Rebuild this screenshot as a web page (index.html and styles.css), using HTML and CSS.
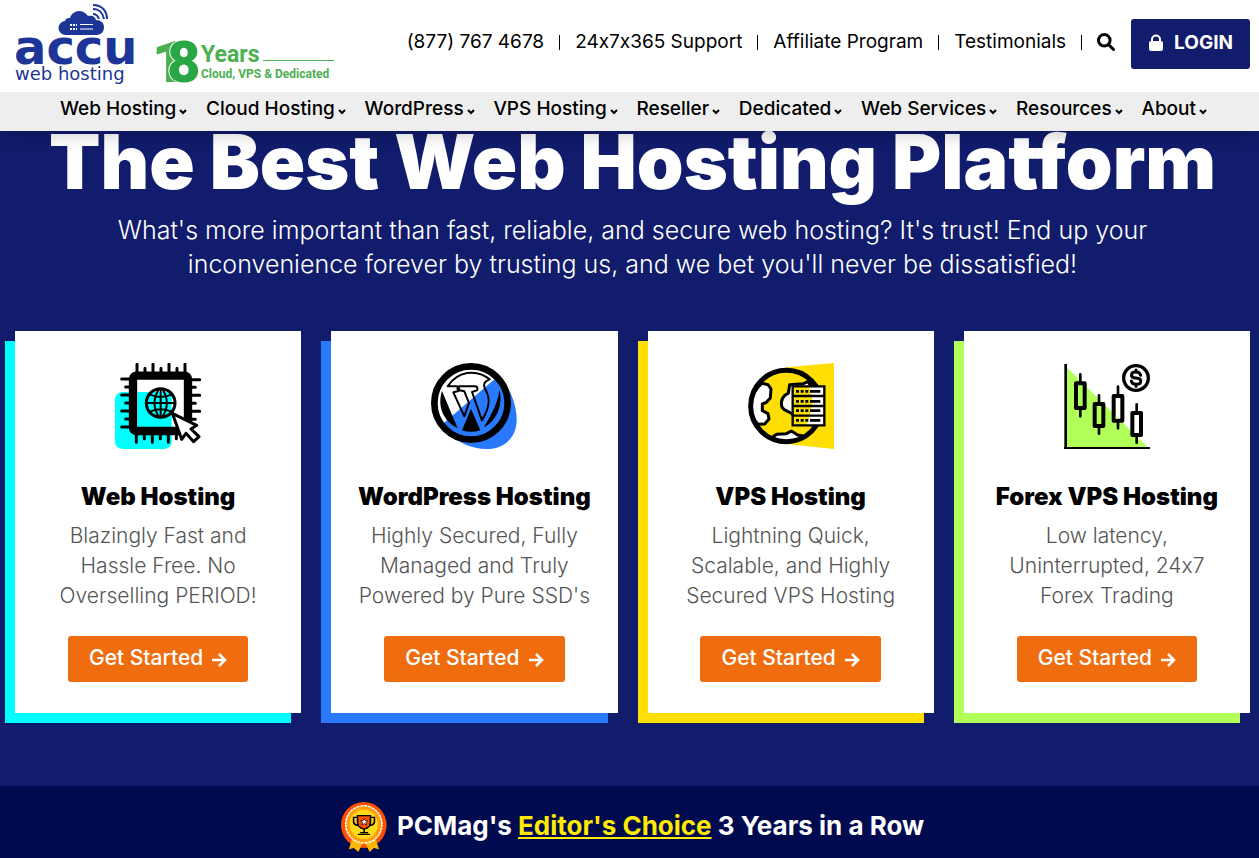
FILE: index.html
```html
<!DOCTYPE html>
<html lang="en">
<head>
    <meta charset="UTF-8">
    <meta name="viewport" content="width=device-width, initial-scale=1.0">
    <title>AccuWeb Hosting</title>
    <link rel="stylesheet" href="styles.css">
</head>
<body>
    <header class="header">
        <div class="topbar">
            <a href="#" class="logo" aria-label="AccuWeb Hosting">
                <svg width="336" height="92" viewBox="0 0 336 92">
                    <path fill="#1c3596" d="M66 35a7 7 0 0 1-1-14c1-3 3-3 5-3 1-4 5-7 9-7 4 0 7 2 9 5 5-1 7 1 8 4 5 0 8 3 8 7 0 5-3 8-8 8z"/>
                    <path stroke="#fff" stroke-width="1" d="M80 24.500h13M80 29h13"/>
                    <path stroke="#fff" stroke-width="2" stroke-dasharray="2 1" d="M70 25h7M70 29h7"/>
                    <path fill="none" stroke="#1c3596" stroke-width="2" d="M93 14c3 0 5 2 6 5M93 9c6 0 10 4 11 10M93 5c9 0 14 6 14 14"/>
                    <text class="logo-accu" x="14" y="64">accu</text>
                    <text class="logo-hosting" x="15" y="80">web hosting</text>
                    <text class="logo-digit" x="152" y="82" fill="#4caf50">1</text>
                    <text class="logo-digit" x="167" y="82" fill="#2aa745" stroke="#fff" stroke-width="2" paint-order="stroke">8</text>
                    <text class="logo-years" x="201" y="62">Years</text>
                    <path stroke="#4caf50" d="M263 60.500h71"/>
                    <text class="logo-tag" x="201" y="78">Cloud, VPS &amp; Dedicated</text>
                </svg>
            </a>
            <ul class="top-links">
                <li><a href="#">(877) 767 4678</a></li>
                <li><a href="#">24x7x365 Support</a></li>
                <li><a href="#">Affiliate Program</a></li>
                <li><a href="#">Testimonials</a></li>
                <li>
                    <button class="search" aria-label="Search">
                        <svg width="18" height="18" viewBox="0 0 18 18" fill="none" stroke="#000" stroke-width="3"><circle cx="7.300" cy="7.300" r="5.800"/><path stroke-linecap="round" d="M11.500 11.500l5 5"/></svg>
                    </button>
                </li>
            </ul>
            <a href="#" class="login">
                <svg width="16" height="18" viewBox="0 0 16 18"><rect x="1" y="8" width="14" height="10" rx="2" fill="#fff"/><path fill="none" stroke="#fff" stroke-width="2" d="M4 9V6.500a4 4 0 0 1 8 0V9"/></svg>
                LOGIN
            </a>
        </div>
        <nav class="menu">
            <a href="#">Web Hosting<svg class="caret" viewBox="0 0 8 6"><path d="M1 1l3 3 3-3"/></svg></a>
            <a href="#">Cloud Hosting<svg class="caret" viewBox="0 0 8 6"><path d="M1 1l3 3 3-3"/></svg></a>
            <a href="#">WordPress<svg class="caret" viewBox="0 0 8 6"><path d="M1 1l3 3 3-3"/></svg></a>
            <a href="#">VPS Hosting<svg class="caret" viewBox="0 0 8 6"><path d="M1 1l3 3 3-3"/></svg></a>
            <a href="#">Reseller<svg class="caret" viewBox="0 0 8 6"><path d="M1 1l3 3 3-3"/></svg></a>
            <a href="#">Dedicated<svg class="caret" viewBox="0 0 8 6"><path d="M1 1l3 3 3-3"/></svg></a>
            <a href="#">Web Services<svg class="caret" viewBox="0 0 8 6"><path d="M1 1l3 3 3-3"/></svg></a>
            <a href="#">Resources<svg class="caret" viewBox="0 0 8 6"><path d="M1 1l3 3 3-3"/></svg></a>
            <a href="#">About<svg class="caret" viewBox="0 0 8 6"><path d="M1 1l3 3 3-3"/></svg></a>
        </nav>
    </header>

    <main class="hero">
        <h1>The Best Web Hosting Platform</h1>
        <p class="lead">What's more important than fast, reliable, and secure web hosting? It's trust! End up your inconvenience forever by trusting us, and we bet you'll never be dissatisfied!</p>

        <div class="cards">
            <div class="card cyan">
                <svg class="icon" viewBox="45 39 258 258">
                    <rect x="45" y="126" width="170" height="171" rx="22" fill="#0ff"/>
                    <rect x="99" y="77" width="165" height="166" rx="8" fill="#fff"/>
                    <path fill="#0ff" d="M112 126h103v105H112z"/>
                    <rect x="99" y="77" width="165" height="166" rx="10" fill="none" stroke="#000" stroke-width="25"/>
                    <path stroke="#000" stroke-width="9" stroke-linecap="round" d="M111 68V43M135 68V55M159 68V43M183 68V55M207 68V43M231 68V55M255 68V43M109 252v25M133 252v14M157 252v25M181 252v14M205 252v25M229 252v14M90 87H65M90 111H77M90 135H65M90 159H77M90 183H65M90 207H77M90 231H65M274 89h25M274 112h12M274 136h25M274 160h12M274 184h25M274 208h12"/>
                    <g fill="none" stroke="#000">
                        <circle cx="182" cy="159" r="43" stroke-width="9"/>
                        <path stroke-width="6" d="M182 116v86M139 159h86M150 134q32 14 64 0M150 185q32-14 64 0M177 117q-27 42 0 84M187 117q27 42 0 84"/>
                    </g>
                    <path fill="#fff" stroke="#000" stroke-width="9" stroke-linejoin="round" d="M217 190l28 78 13-18 23 25 16-15-24-23 17-11z"/>
                </svg>
                <h2>Web Hosting</h2>
                <p>Blazingly Fast and Hassle Free. No Overselling PERIOD!</p>
                <a href="#" class="btn">Get Started <svg class="arrow" viewBox="0 0 16 16"><path d="M1 8h13M8 2l6 6-6 6"/></svg></a>
            </div>

            <div class="card blue">
                <svg class="icon" viewBox="46 39 258 258">
                    <path fill="#2979ff" d="M247 76C283 110 303 165 303 209c0 54-38 88-90 88-48 0-104-25-137-70z"/>
                    <circle cx="166" cy="159" r="110" fill="#fff"/>
                    <path fill="#2979ff" d="M244 81a110 110 0 0 1-154 157l-10-15z"/>
                    <circle cx="166" cy="159" r="110" fill="none" stroke="#000" stroke-width="20"/>
                    <path fill="#000" d="M79 123c-15 46 4 90 47 112zM251 119c12 43-6 91-46 113 25-45 43-77 46-113zM166 176l28 65q-28 9-55 0z"/>
                    <path fill="none" stroke="#000" stroke-width="6" stroke-linejoin="round" d="M96 109C125 64 181 55 222 88c-17 6-20 16-14 28 13 21 17 43 0 78l-9 17-30-85 15-5c4-8 0-12-7-12h-45c-9 0-9 11 0 12l14 3 14 35-14 40-33-72 16-4c4-9 0-14-7-14z"/>
                </svg>
                <h2>WordPress Hosting</h2>
                <p>Highly Secured, Fully Managed and Truly Powered by Pure SSD's</p>
                <a href="#" class="btn">Get Started <svg class="arrow" viewBox="0 0 16 16"><path d="M1 8h13M8 2l6 6-6 6"/></svg></a>
            </div>

            <div class="card yellow">
                <svg class="icon" viewBox="47 39 258 258">
                    <path fill="#ffde03" d="M306 39v258L162 282V52z"/>
                    <circle cx="162" cy="168" r="107" fill="#ffde03"/>
                    <g fill="#fff" stroke="#000" stroke-width="9" stroke-linejoin="round">
                        <path d="M89 100l18 4 9 13-2 27-12 13-12 5v20l17 9 3 16-13 15-20 1C46 191 51 130 89 100z"/>
                        <path d="M183 196c-9-14-26-10-34-24-6-19 3-37 19-42l4-26 41-3 14-6 27 40-16 61z"/>
                        <path d="M120 262l13-9 29-2 15-8 19 12 17 3c-26 24-65 25-93 4z"/>
                    </g>
                    <circle cx="162" cy="168" r="107" fill="none" stroke="#000" stroke-width="15"/>
                    <path fill="#fff" d="M181 109h95v117h-95z"/>
                    <path fill="#ffde03" d="M181 109h48l12 45-5 28-13 44h-42z"/>
                    <path fill="none" stroke="#000" stroke-width="7" d="M181 109h95v117h-95zM181 138h95M181 168h95M181 197h95"/>
                    <path stroke="#000" stroke-width="8" d="M191 124h9M205 124h9M219 124h9M233 124h31M191 154h9M205 154h9M219 154h9M233 154h31M191 182h9M205 182h9M219 182h9M233 182h31M191 211h9M205 211h9M219 211h9M233 211h31"/>
                </svg>
                <h2>VPS Hosting</h2>
                <p>Lightning Quick, Scalable, and Highly Secured VPS Hosting</p>
                <a href="#" class="btn">Get Started <svg class="arrow" viewBox="0 0 16 16"><path d="M1 8h13M8 2l6 6-6 6"/></svg></a>
            </div>

            <div class="card lime">
                <svg class="icon" viewBox="48 39 258 258">
                    <path fill="#b2ff59" d="M53 49l246 243H53z"/>
                    <path fill="none" stroke="#000" stroke-width="8" stroke-linecap="round" d="M97 73v126M153 136v115M210 110v125M266 163v115"/>
                    <path fill="#b2ff59" stroke="#000" stroke-width="12" stroke-linejoin="round" d="M84 100h26v74H84zM140 162h26v66h-26z"/>
                    <path fill="#fff" stroke="#000" stroke-width="12" stroke-linejoin="round" d="M197 138h26v74h-26zM253 189h26v66h-26z"/>
                    <path fill="#b2ff59" d="M203 197l9 9h-9z"/>
                    <path fill="none" stroke="#000" stroke-width="8" d="M53 42v251"/>
                    <path fill="none" stroke="#000" stroke-width="6" d="M48 294h258"/>
                    <circle cx="264" cy="84" r="37" fill="#fff" stroke="#000" stroke-width="10"/>
                    <path fill="none" stroke="#000" stroke-width="9" stroke-linecap="round" d="M278 76c-2-7-7-10-14-10-18 0-18 17 0 18 19 1 19 19 0 19-8 0-13-4-14-10M264 60v6M264 103v6"/>
                </svg>
                <h2>Forex VPS Hosting</h2>
                <p>Low latency, Uninterrupted, 24x7 Forex Trading</p>
                <a href="#" class="btn">Get Started <svg class="arrow" viewBox="0 0 16 16"><path d="M1 8h13M8 2l6 6-6 6"/></svg></a>
            </div>
        </div>
    </main>

    <section class="award">
        <svg width="46" height="50" viewBox="0 0 117 150" preserveAspectRatio="none">
            <ellipse cx="58" cy="69" rx="58" ry="69" fill="#ff5000"/>
            <path fill="#ffb80a" d="M28 112l-8 30 13-4 11 12 14-34 15 34 10-12 14 4-9-30z"/>
            <ellipse cx="58" cy="67" rx="46" ry="56" fill="#ff9d0a" stroke="#fff" stroke-width="4" stroke-dasharray="8 2"/>
            <ellipse cx="58" cy="67" rx="36" ry="44" fill="#ffd91a"/>
            <path fill="#ff5000" stroke="#000" stroke-width="4" d="M42 41h33v20q0 17-16 20-17-3-17-20z"/>
            <path fill="none" stroke="#000" stroke-width="4" d="M42 46H32v14q2 10 12 10M75 46h10v14q-2 10-12 10M59 81v10M49 92h20M43 97h31"/>
            <path fill="#fff" stroke="#000" stroke-width="2" d="M59 50l3 6 6 1-5 5 2 7-6-4-6 4 2-7-5-5 6-1z"/>
        </svg>
        <p>PCMag's <a href="#">Editor's Choice</a> 3 Years in a Row</p>
    </section>
</body>
</html>
```
FILE: styles.css
```css
* {
    box-sizing: border-box;
}
body {
    margin: 0;
    font-family: Inter, "Liberation Sans", sans-serif;
    font-variant-ligatures: no-contextual;
    background-color: #000a4e;
    color: #000;
}
h1, h2, p, ul {
    margin: 0;
    padding: 0;
}
a {
    color: inherit;
    text-decoration: none;
}
.header {
    position: relative;
    z-index: 10;
    background-color: #fff;
    box-shadow: 0 0 20px rgba(0, 0, 0, 0.3);
}
.topbar {
    display: flex;
    align-items: center;
    height: 92px;
    padding-right: 9px;
}
.logo {
    margin-right: auto;
}
.logo svg {
    display: block;
    overflow: visible;
}
.logo-accu {
    font: bold 48px "DejaVu Sans", sans-serif;
    fill: #1c3596;
}
.logo-hosting {
    font: 18px "DejaVu Sans", sans-serif;
    fill: #1c3596;
}
.logo-digit {
    font: 900 58px Roboto, sans-serif;
}
.logo-years {
    font: bold 23px Roboto, sans-serif;
    fill: #4caf50;
}
.logo-tag {
    font: bold 12px Roboto, sans-serif;
    fill: #4caf50;
}
.top-links {
    display: flex;
    align-items: center;
    list-style: none;
    font-size: 19px;
    line-height: 24px;
    padding-bottom: 8px;
}
.top-links li {
    display: flex;
    align-items: center;
    white-space: nowrap;
}
.top-links li + li::before {
    content: "";
    width: 1px;
    height: 15px;
    margin: 0 15px;
    background-color: #000;
}
.search {
    display: flex;
    padding: 0;
    border: 0;
    background: none;
    cursor: pointer;
}
.login {
    display: flex;
    align-items: center;
    gap: 10px;
    height: 50px;
    margin: 0 0 4px 16px;
    padding: 0 17px 4px;
    border-radius: 3px;
    background-color: #111c6c;
    color: #fff;
    font-size: 19px;
    font-weight: 700;
}
.menu {
    display: flex;
    justify-content: space-between;
    padding: 5px 52px 10px 60px;
    background-color: #eee;
    font-size: 19px;
    font-weight: 500;
    line-height: 24px;
    white-space: nowrap;
}
.caret {
    width: 8px;
    height: 6px;
    margin-left: 3px;
    fill: none;
    stroke: #000;
    stroke-width: 2;
}
.hero {
    padding: 0 9px 73px 15px;
    background-color: #111c6c;
    color: #fff;
    text-align: center;
}
h1 {
    font-size: 75px;
    font-weight: 900;
    line-height: 62px;
    white-space: nowrap;
}
.lead {
    max-width: 1110px;
    margin: 20px auto 50px;
    font-size: 25px;
    font-weight: 300;
    line-height: 34px;
}
.cards {
    display: grid;
    grid-template-columns: repeat(4, minmax(0, 1fr));
    gap: 30px;
}
.card {
    display: flex;
    flex-direction: column;
    align-items: center;
    padding: 32px 20px 31px;
    background-color: #fff;
    color: #000;
}
.cyan {
    box-shadow: -10px 10px #0ff;
}
.blue {
    box-shadow: -10px 10px #2979ff;
}
.yellow {
    box-shadow: -10px 10px #ffde03;
}
.lime {
    box-shadow: -10px 10px #b2ff59;
}
.icon {
    width: 86px;
    height: 86px;
}
.card h2 {
    margin: 33px 0 9px;
    font-size: 24px;
    font-weight: 900;
    line-height: 30px;
    white-space: nowrap;
}
.card p {
    max-width: 240px;
    margin-bottom: 25px;
    color: #555;
    font-size: 21px;
    font-weight: 300;
    line-height: 30px;
}
.btn {
    display: flex;
    align-items: center;
    gap: 8px;
    height: 46px;
    padding: 0 21px 3px;
    border-radius: 3px;
    background-color: #f06d0f;
    color: #fff;
    font-size: 21px;
    font-weight: 500;
    white-space: nowrap;
}
.arrow {
    width: 16px;
    height: 16px;
    margin-top: 4px;
    fill: none;
    stroke: #fff;
    stroke-width: 2.5;
}
.award {
    display: flex;
    align-items: center;
    justify-content: center;
    gap: 10px;
    padding: 16px 9px 6px 15px;
    color: #fff;
    font-size: 26px;
    font-weight: 700;
    line-height: 48px;
}
.award p {
    padding-bottom: 2px;
}
.award a {
    color: #ffea00;
    text-decoration: underline;
}
```
